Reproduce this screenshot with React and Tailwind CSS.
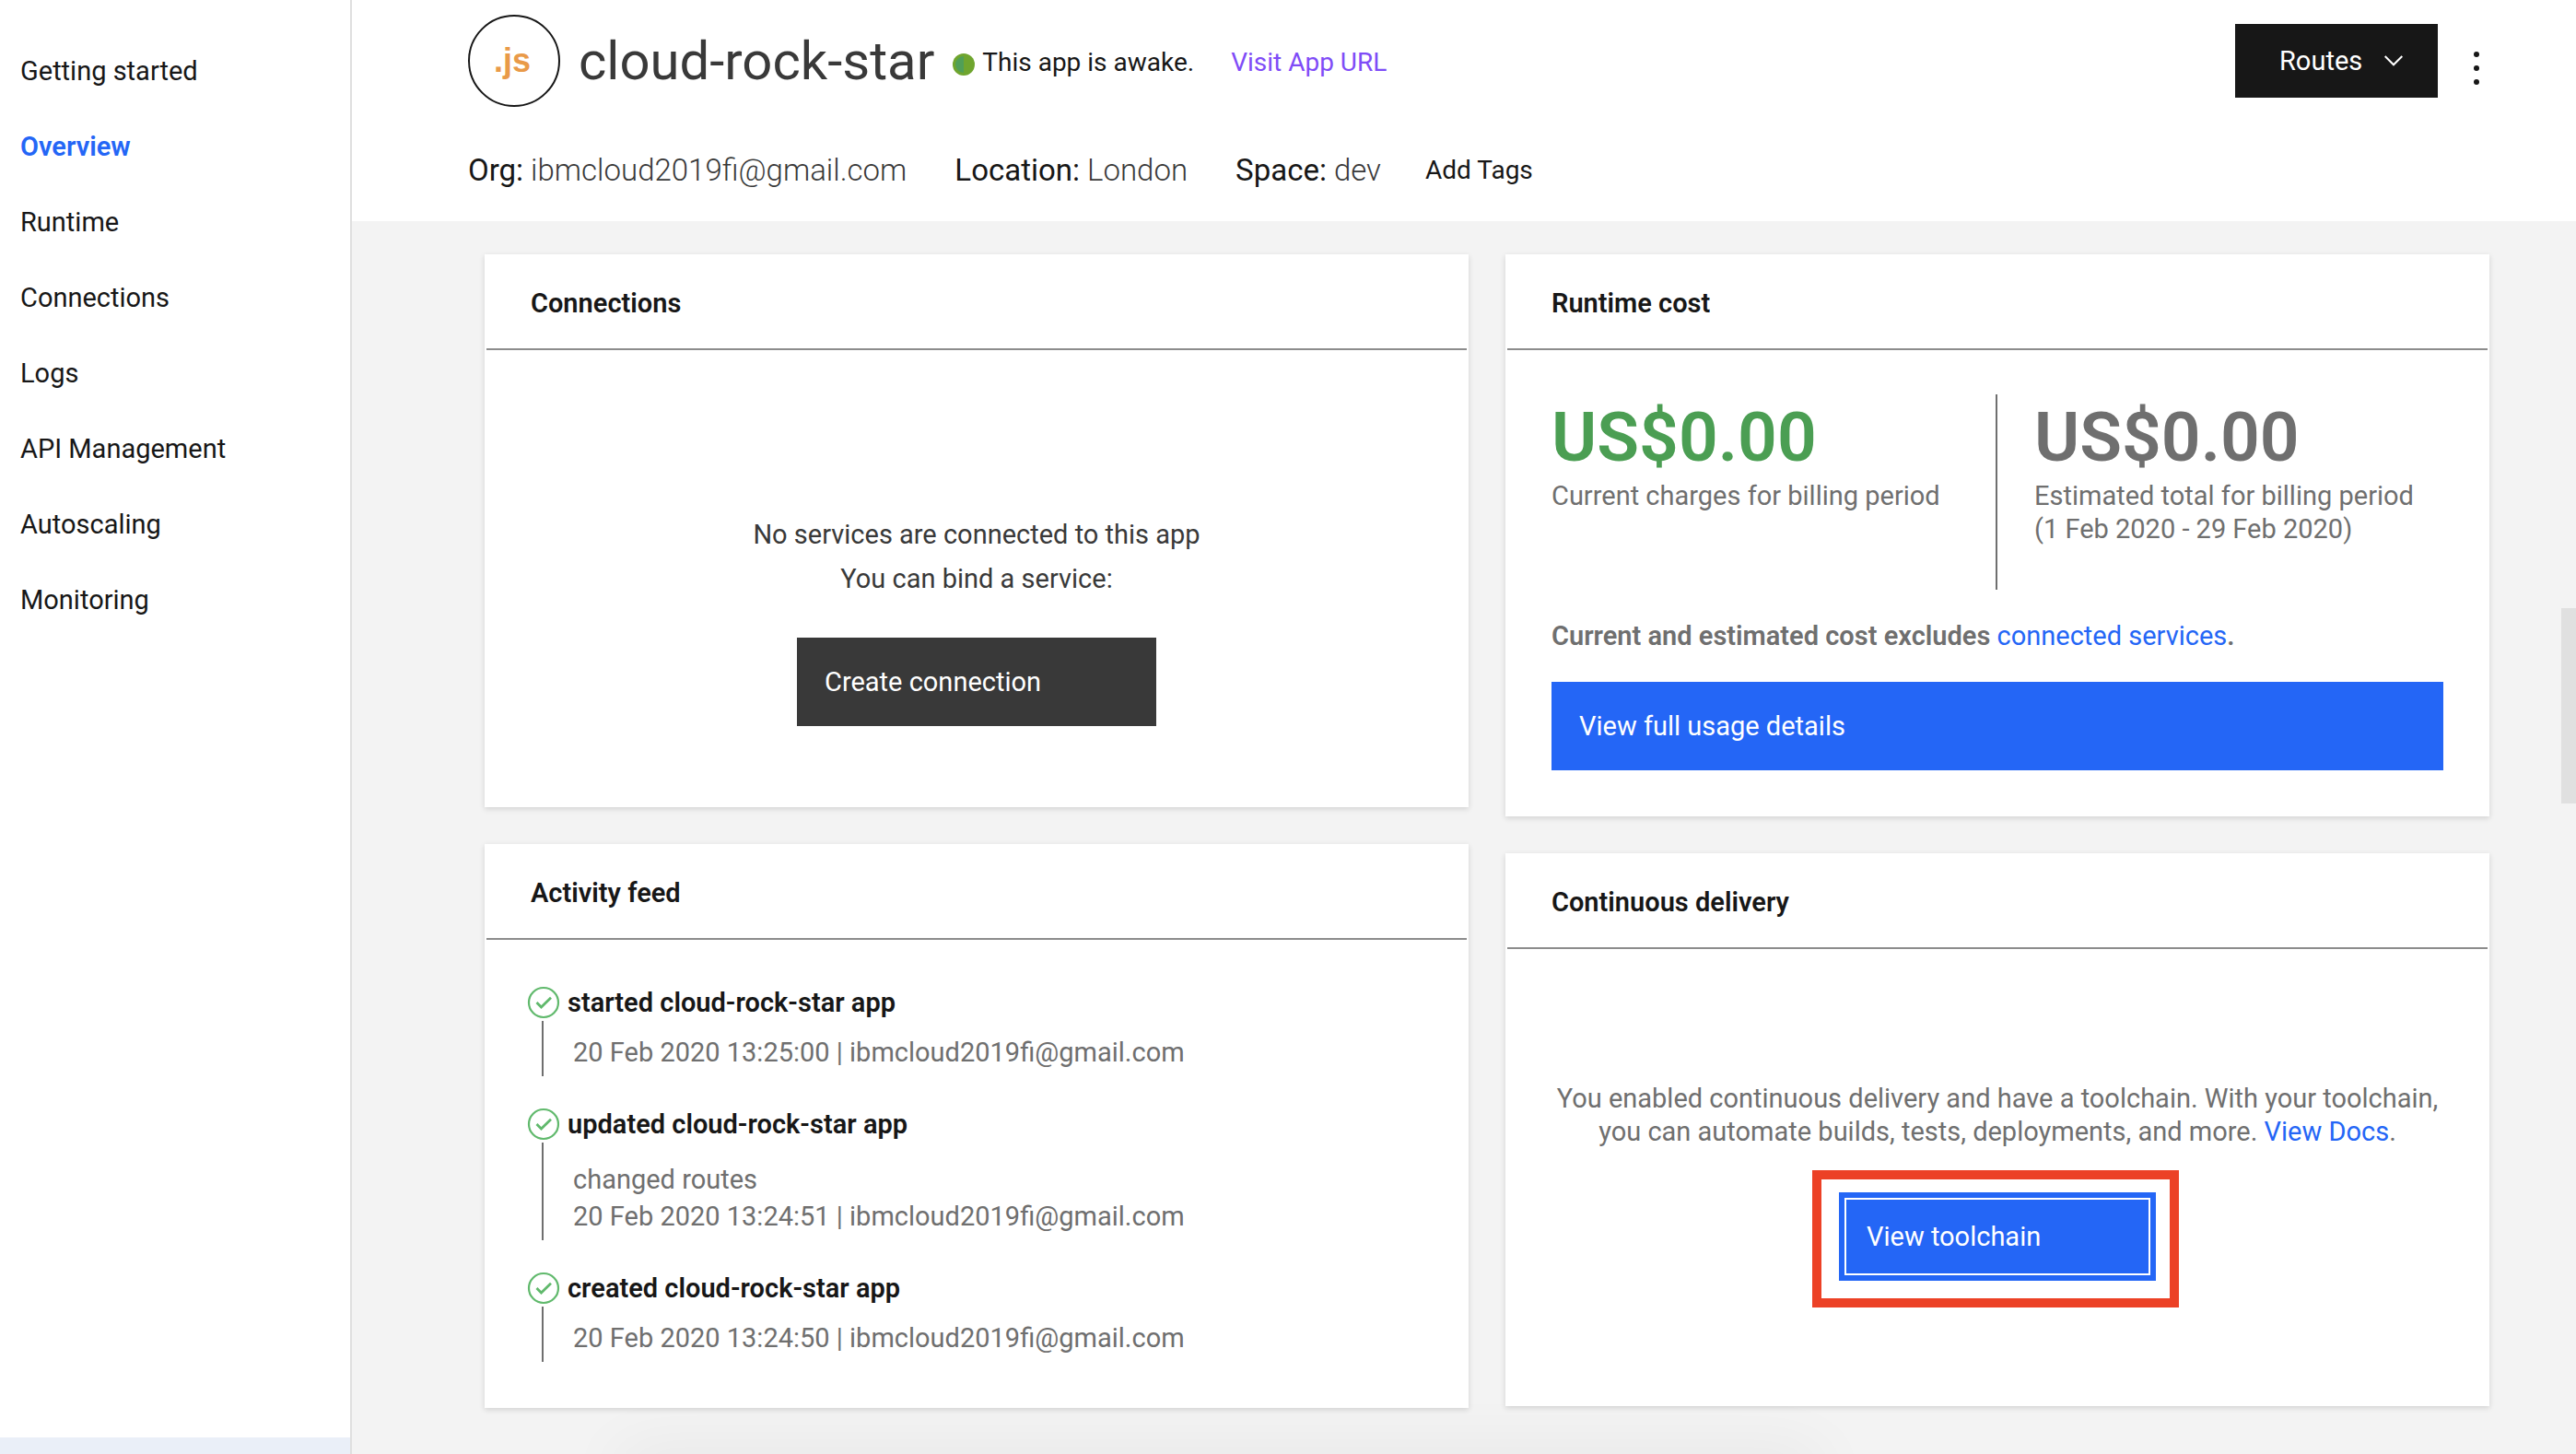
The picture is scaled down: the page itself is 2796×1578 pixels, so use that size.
const NAV = [
  "Getting started",
  "Overview",
  "Runtime",
  "Connections",
  "Logs",
  "API Management",
  "Autoscaling",
  "Monitoring",
];

const EVENTS = [
  {
    title: "started cloud-rock-star app",
    meta: "20 Feb 2020 13:25:00 | ibmcloud2019fi@gmail.com",
  },
  {
    title: "updated cloud-rock-star app",
    note: "changed routes",
    meta: "20 Feb 2020 13:24:51 | ibmcloud2019fi@gmail.com",
  },
  {
    title: "created cloud-rock-star app",
    meta: "20 Feb 2020 13:24:50 | ibmcloud2019fi@gmail.com",
  },
];

function Sidebar() {
  return (
    <aside className="flex w-[382px] shrink-0 flex-col justify-between border-r-2 border-[#dfdfdf] bg-white">
      <nav aria-label="App sections" className="pt-9">
        <ul>
          {NAV.map((item) => (
            <li key={item}>
              <a
                href="#"
                aria-current={item === "Overview" ? "page" : undefined}
                className={
                  item === "Overview"
                    ? "flex h-[82px] items-center pl-[22px] font-semibold text-[#2466f6]"
                    : "flex h-[82px] items-center pl-[22px] text-[#171717]"
                }
              >
                {item}
              </a>
            </li>
          ))}
        </ul>
      </nav>
      <div className="h-[18px] bg-[#eaeff8]" />
    </aside>
  );
}

function Detail({ label, value }) {
  return (
    <div className="flex gap-2">
      <dt className="text-[#171717]">{label}</dt>
      <dd className="font-light text-[#393939]">{value}</dd>
    </div>
  );
}

function Header() {
  return (
    <header className="flex h-[240px] items-start justify-between bg-white pt-4 pr-[98px] pl-[126px]">
      <div>
        <div className="flex items-center">
          <div className="flex size-[100px] items-center justify-center rounded-full border-2 border-[#171717] pr-1 font-['Liberation_Sans'] text-[36px] font-bold text-[#e99a49]">
            .js
          </div>
          <h1 className="ml-5 text-[58px] leading-[100px] text-[#393939]">cloud-rock-star</h1>
          <svg className="mt-2 ml-5 size-6" viewBox="0 0 24 24" aria-hidden="true">
            <circle cx="12" cy="12" r="12" fill="#6fa52e" />
            <path d="M12 3A9 9 0 0 0 12 21Z" fill="#509f57" />
          </svg>
          <div className="mt-1 ml-2 flex gap-10 text-[28px]">
            <span className="text-[#171717]">This app is awake.</span>
            <a href="#" className="text-[#7f4cf7]">
              Visit App URL
            </a>
          </div>
        </div>
        <div className="mt-12 flex items-center gap-12">
          <dl className="flex gap-[52px] text-[33px] leading-[42px]">
            <Detail label="Org:" value="ibmcloud2019fi@gmail.com" />
            <Detail label="Location:" value="London" />
            <Detail label="Space:" value="dev" />
          </dl>
          <button type="button" className="text-[28px] text-[#171717]">
            Add Tags
          </button>
        </div>
      </div>
      <div className="flex items-center pt-[10px]">
        <button
          type="button"
          className="flex h-20 w-[220px] items-center gap-6 bg-[#171717] pl-12 text-white"
        >
          Routes
          <svg className="h-3 w-5" viewBox="0 0 20 12" fill="none" stroke="currentColor" strokeWidth="2" aria-hidden="true">
            <path d="M.7 1 10 10.300 19.300 1" />
          </svg>
        </button>
        <button type="button" aria-label="More actions" className="mt-4 ml-8 flex h-10 w-5 items-center justify-center">
          <svg className="h-9 w-[6px]" viewBox="0 0 6 36" fill="#171717" aria-hidden="true">
            <circle cx="3" cy="3" r="3" />
            <circle cx="3" cy="18" r="3" />
            <circle cx="3" cy="33" r="3" />
          </svg>
        </button>
      </div>
    </header>
  );
}

function Card({ title, className, children }) {
  return (
    <section className={`flex flex-col bg-white px-[2px] shadow-[0_2px_6px_rgba(0,0,0,0.14)] ${className}`}>
      <h2 className="flex h-[104px] shrink-0 items-center border-b-2 border-[#8c8c8c] px-12 pt-1 font-semibold text-[#171717]">
        {title}
      </h2>
      {children}
    </section>
  );
}

function ConnectionsCard() {
  return (
    <Card title="Connections" className="h-[600px]">
      <div className="flex flex-col items-center pt-44 text-center leading-[48px] text-[#393939]">
        <p>No services are connected to this app</p>
        <p>You can bind a service:</p>
        <button type="button" className="mt-10 h-24 w-[390px] bg-[#393939] px-[30px] text-left text-white">
          Create connection
        </button>
      </div>
    </Card>
  );
}

function CostCard() {
  return (
    <Card title="Runtime cost" className="h-[610px]">
      <div className="px-12 pt-12 text-[#6f6f6f]">
        <div className="grid h-[212px] grid-cols-[120fr_121fr]">
          <div>
            <p className="text-[75px] leading-[92px] font-semibold text-[#4b9e53]">US$0.00</p>
            <p>Current charges for billing period</p>
          </div>
          <div className="border-l-2 border-[#6f6f6f] pl-10">
            <p className="text-[75px] leading-[92px] font-semibold">US$0.00</p>
            <p>
              Estimated total for billing period
              <br />
              (1 Feb 2020 - 29 Feb 2020)
            </p>
          </div>
        </div>
        <p className="mt-8 font-semibold">
          Current and estimated cost excludes{" "}
          <a href="#" className="font-normal text-[#2466f6]">
            connected services
          </a>
          .
        </p>
        <button type="button" className="mt-8 h-24 w-full bg-[#2466f6] px-[30px] text-left text-white">
          View full usage details
        </button>
      </div>
    </Card>
  );
}

function CheckIcon() {
  return (
    <svg className="size-9 shrink-0" viewBox="0 0 36 36" fill="none" stroke="#60b96c" aria-hidden="true">
      <circle cx="18" cy="18" r="16" strokeWidth="2.200" />
      <path d="M10.500 18 15.500 23 26 12.800" strokeWidth="2.800" />
    </svg>
  );
}

function ActivityCard() {
  return (
    <Card title="Activity feed" className="h-[612px]">
      <ol className="flex flex-col gap-[34px] pt-[50px] pl-11">
        {EVENTS.map((event) => (
          <li key={event.title}>
            <div className="flex items-center gap-2">
              <CheckIcon />
              <h3 className="font-semibold text-[#171717]">{event.title}</h3>
            </div>
            <div className="mt-[2px] ml-4 border-l-2 border-[#6f6f6f] pt-[14px] pb-[6px] pl-8 leading-10 text-[#6f6f6f]">
              {event.note ? <p className="pt-[6px]">{event.note}</p> : null}
              <p>{event.meta}</p>
            </div>
          </li>
        ))}
      </ol>
    </Card>
  );
}

function DeliveryCard() {
  return (
    <Card title="Continuous delivery" className="h-[600px]">
      <div className="flex flex-col items-center px-12 pt-36 text-center text-[#6f6f6f]">
        <p>
          You enabled continuous delivery and have a toolchain. With your toolchain,
          <br />
          you can automate builds, tests, deployments, and more.{" "}
          <a href="#" className="text-[#2466f6]">
            View Docs
          </a>
          .
        </p>
        <div className="mt-6 mr-1 border-[10px] border-[#ec4126] pt-[14px] pr-[15px] pb-[19px] pl-[19px]">
          <button type="button" className="h-24 w-[344px] bg-[#2466f6] p-[6px] text-left text-white">
            <span className="flex h-full items-center border-2 border-white pl-[22px]">View toolchain</span>
          </button>
        </div>
      </div>
    </Card>
  );
}

export default function App() {
  return (
    <div className="relative flex min-h-screen overflow-hidden font-[Roboto,sans-serif] text-[29px] leading-[36px]">
      <Sidebar />
      <div className="flex min-w-0 flex-1 flex-col">
        <Header />
        <main className="relative grid flex-1 grid-cols-2 gap-10 overflow-hidden bg-[#f3f3f3] pt-9 pr-[94px] pb-[50px] pl-36">
          <div className="absolute -bottom-10 left-[12%] h-10 w-[54%] shadow-[0_0_70px_rgba(0,0,0,0.07)]" />
          <div className="relative flex flex-col gap-10">
            <ConnectionsCard />
            <ActivityCard />
          </div>
          <div className="relative flex flex-col gap-10">
            <CostCard />
            <DeliveryCard />
          </div>
        </main>
      </div>
      <div className="absolute top-[660px] right-0 h-[212px] w-4 bg-[#e0e0e0]" />
    </div>
  );
}
